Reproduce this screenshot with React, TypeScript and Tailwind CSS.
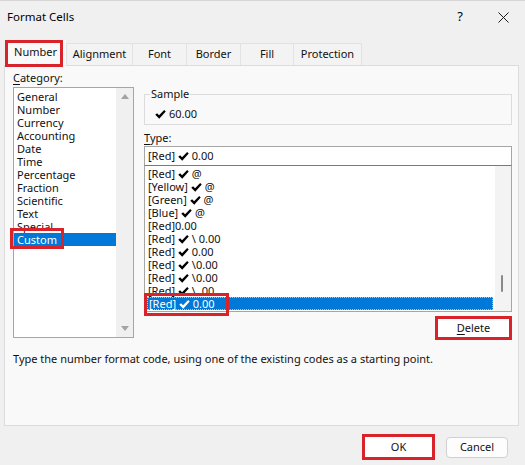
import React from 'react'

const font = { fontFamily: '"Noto Sans", "Liberation Sans", sans-serif' }

const Check = ({ white = false }: { white?: boolean }) => (
  <svg
    viewBox="0 0 12 10"
    className="inline-block h-[9px] w-[11px] align-[-1px]"
    fill={white ? '#ffffff' : '#000000'}
  >
    <path d="M0.2 5.4 L2.2 3.5 L4.4 5.7 L10.1 0.1 L11.8 1.7 L4.6 9.8 Z" />
  </svg>
)

const categories = [
  'General',
  'Number',
  'Currency',
  'Accounting',
  'Date',
  'Time',
  'Percentage',
  'Fraction',
  'Scientific',
  'Text',
  'Special',
]

// [prefix, hasCheck, suffix]
const formats: [string, boolean, string][] = [
  ['[Red]', true, '@'],
  ['[Yellow]', true, '@'],
  ['[Green]', true, '@'],
  ['[Blue]', true, '@'],
  ['[Red]0.00', false, ''],
  ['[Red]', true, '\\ 0.00'],
  ['[Red]', true, '0.00'],
  ['[Red]', true, '\\0.00'],
  ['[Red]', true, '\\0.00'],
  ['[Red]', true, '\\ .00'],
]

const RedBox = ({ className }: { className: string }) => (
  <div className={`pointer-events-none absolute z-20 border-[3px] border-[#d8232a] ${className}`} />
)

const tabs = [
  { label: 'Alignment', w: 'w-[67px]' },
  { label: 'Font', w: 'w-[54px]' },
  { label: 'Border', w: 'w-[54px]' },
  { label: 'Fill', w: 'w-[53px]' },
  { label: 'Protection', w: 'w-[68px]' },
]

const TitleBar = () => (
  <div className="flex h-[32px] items-center justify-between pl-[7px] pr-[16px]">
    <span className="text-[11.5px] text-black">Format Cells</span>
    <div className="flex items-center gap-[35px]">
      <span className="text-[13px] text-black">?</span>
      <svg viewBox="0 0 11 11" className="h-[11px] w-[11px]" stroke="#1a1a1a" strokeWidth="1">
        <path d="M0.5 0.5 L10.5 10.5 M10.5 0.5 L0.5 10.5" />
      </svg>
    </div>
  </div>
)

const TabRow = () => (
  <div className="flex h-[32px] items-end pl-[5px]">
    <div className="relative z-10 -mb-px flex h-[26px] w-[61px] items-center justify-center bg-[#f9f9f9] pb-[1px] text-[11px]">
      Number
      <RedBox className="left-0 top-0 h-[27px] w-[58px]" />
    </div>
    {tabs.map((t, i) => (
      <div
        key={t.label}
        className={`flex h-[22px] items-center justify-center border-r border-t border-[#e2e2e2] bg-[#f3f3f3] text-[11px] ${t.w} ${
          i === 0 ? 'border-l' : ''
        }`}
      >
        {t.label}
      </div>
    ))}
  </div>
)

const CategoryList = () => (
  <div className="w-[121px]">
    <div className="h-[14px] text-[11px] leading-[14px]">
      <u className="underline-offset-2">C</u>ategory:
    </div>
    <div className="mt-[2px] flex h-[251px] border border-[#a6a6a6] bg-white">
      <div className="flex-1 pt-[2px]">
        {categories.map((c) => (
          <div key={c} className="h-[13px] pl-[3px] text-[11px] leading-[13px]">
            {c}
          </div>
        ))}
        <div className="relative h-[13px] bg-[#0078d7] pl-[3px] text-[11px] leading-[13px] text-white">
          Custom
          <RedBox className="-left-[4px] -top-[5px] h-[21px] w-[54px]" />
        </div>
      </div>
      <div className="flex w-[17px] flex-col items-center justify-between bg-[#f0f0f0] py-[6px]">
        <svg viewBox="0 0 8 5" className="h-[5px] w-[8px]" fill="#a3a3a3">
          <path d="M0 5 L4 0 L8 5 Z" />
        </svg>
        <svg viewBox="0 0 8 5" className="h-[5px] w-[8px]" fill="#a3a3a3">
          <path d="M0 0 L4 5 L8 0 Z" />
        </svg>
      </div>
    </div>
  </div>
)

const FormatRow = ({ f }: { f: [string, boolean, string] }) => (
  <div className="h-[13px] whitespace-pre pl-[1px] text-[11px] leading-[13px]">
    {f[0]}
    {f[1] ? ' ' : ''}
    {f[1] ? <Check /> : null}
    {f[1] ? ' ' : ''}
    {f[2]}
  </div>
)

const TypeSection = () => (
  <div className="w-[368px]">
    <fieldset className="mt-[16px] border border-[#dcdcdc] px-[5px] pb-[3px]">
      <legend className="h-[14px] px-px text-[11px] leading-[14px]">Sample</legend>
      <div className="mt-[6px] flex h-[14px] items-center gap-[3px] pl-[5px] text-[11px] leading-[14px]">
        <Check />
        <span>60.00</span>
      </div>
    </fieldset>

    <div className="mt-[6px] h-[14px] text-[11px] leading-[14px]">
      <u className="underline-offset-2">T</u>ype:
    </div>
    <div className="mt-px flex h-[20px] items-center whitespace-pre border border-[#a6a6a6] border-b-[#7a7a7a] bg-white pl-[3px] text-[11px]">
      [Red] <Check /> 0.00
    </div>
    <div className="flex h-[146px] border-x border-b border-[#a6a6a6] bg-white">
      <div className="flex-1 px-[2px] pt-px">
        {formats.map((f, i) => (
          <FormatRow key={i} f={f} />
        ))}
        <div className="relative h-[13px] whitespace-pre border border-dotted border-[#9fc9f0] bg-[#0078d7] pl-px text-[11px] leading-[11px] text-white">
          [Red] <Check white /> 0.00
          <RedBox className="-left-[4px] -top-[5px] h-[23px] w-[85px]" />
        </div>
      </div>
      <div className="relative w-[16px] bg-[#f3f3f3]">
        <div className="absolute left-[6px] top-[109px] h-[17px] w-[2px] rounded-full bg-[#8a8a8a]" />
      </div>
    </div>
    <div className="mt-[4px] flex justify-end">
      <div className="flex h-[24px] w-[77px] items-center justify-center border-[3px] border-[#d8232a] bg-white text-[11px]">
        <span>
          <u className="underline-offset-2">D</u>elete
        </span>
      </div>
    </div>
  </div>
)

export default function App() {
  return (
    <div
      className="h-[465px] w-[525px] overflow-hidden border-t border-[#d6d6d6] bg-[#f0f0f0] text-[#111]"
      style={font}
    >
      <TitleBar />
      <TabRow />
      <div className="ml-[4px] h-[361px] w-[515px] border border-[#dcdcdc] bg-[#f9f9f9] pt-[5px]">
        <div className="flex gap-[10px] pl-[8px]">
          <CategoryList />
          <TypeSection />
        </div>
        <div className="mt-[12px] h-[14px] pl-[8px] text-[11px] leading-[14px]">
          Type the number format code, using one of the existing codes as a starting point.
        </div>
      </div>
      <div className="mt-[8px] flex items-center justify-end gap-[11px] pr-[17px]">
        <div className="flex h-[26px] w-[73px] items-center justify-center border-[3px] border-[#d8232a] bg-white text-[11px]">
          OK
        </div>
        <div className="flex h-[21px] w-[62px] items-center justify-center rounded-[4px] border border-[#d0d0d0] bg-[#fdfdfd] text-[11px]">
          Cancel
        </div>
      </div>
    </div>
  )
}
